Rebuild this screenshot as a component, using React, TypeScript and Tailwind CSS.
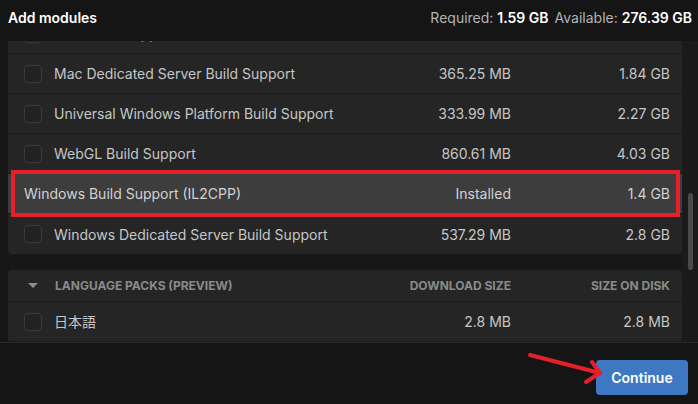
import React from "react";

type Row = { name: string; dl: string; disk: string; highlight?: boolean };

const rows: Row[] = [
  { name: "Mac Build Support (Mono)", dl: "", disk: "" },
  { name: "Mac Dedicated Server Build Support", dl: "365.25 MB", disk: "1.84 GB" },
  { name: "Universal Windows Platform Build Support", dl: "333.99 MB", disk: "2.27 GB" },
  { name: "WebGL Build Support", dl: "860.61 MB", disk: "4.03 GB" },
  { name: "Windows Build Support (IL2CPP)", dl: "Installed", disk: "1.4 GB", highlight: true },
  { name: "Windows Dedicated Server Build Support", dl: "537.29 MB", disk: "2.8 GB" },
];

function Checkbox() {
  return <div className="w-[18px] h-[18px] shrink-0 rounded-[4px] border border-[#3a3a3a] bg-[#222222]" />;
}

function ModuleRow({ r, last }: { r: Row; last?: boolean }) {
  return (
    <div
      className={`relative flex items-center h-10 pl-4 pr-3 ${last ? "" : "border-b border-[#1b1b1b]"} ${
        r.highlight ? "bg-[#3d3d3d] text-[#d2d2d2]" : "text-[#c6c6c6]"
      }`}
    >
      {!r.highlight && <Checkbox />}
      <div className={`flex-1 truncate ${r.highlight ? "" : "ml-3"}`}>{r.name}</div>
      <div className="w-[140px] text-right">{r.dl}</div>
      <div className="w-[159px] text-right">{r.disk}</div>
      {r.highlight && (
        <div className="absolute -top-1 -bottom-1 left-[3px] right-[2px] border-4 border-[#e61f28] z-10 pointer-events-none" />
      )}
    </div>
  );
}

export default function App() {
  return (
    <div
      className="w-[698px] h-[404px] bg-[#171717] flex flex-col overflow-hidden text-[14px]"
      style={{ fontFamily: "Inter, 'Noto Sans CJK JP', sans-serif" }}
    >
      <div className="h-[41px] shrink-0 bg-[#151515] flex items-start justify-between pt-[8px] pl-[8px] pr-[6px] leading-5">
        <div className="font-semibold text-white">Add modules</div>
        <div className="text-[#b3b3b3]">
          Required: <span className="font-semibold text-white">1.59 GB</span>
          <span className="ml-[6px]">Available: </span>
          <span className="font-semibold text-white">276.39 GB</span>
        </div>
      </div>

      <div className="flex-1 flex overflow-hidden min-h-0">
        <div className="flex-1 pl-2 overflow-hidden">
          <div className="-mt-[27px] flex flex-col gap-4">
            <div className="rounded-[4px] bg-[#252525] overflow-hidden">
              {rows.map((r, i) => (
                <ModuleRow key={r.name} r={r} last={i === rows.length - 1} />
              ))}
            </div>
            <div className="rounded-[4px] bg-[#252525] overflow-hidden">
              <div className="flex items-center h-8 pl-[20px] pr-3 border-b border-[#1b1b1b] text-[12px] font-bold text-[#8a8a8a]">
                <svg width="10" height="6" viewBox="0 0 10 6" className="shrink-0">
                  <path d="M0 0 L10 0 L5 5 Z" fill="#8c8c8c" />
                </svg>
                <div className="flex-1 ml-[17px]">LANGUAGE PACKS (PREVIEW)</div>
                <div className="w-[140px] text-right">DOWNLOAD SIZE</div>
                <div className="w-[159px] text-right">SIZE ON DISK</div>
              </div>
              <ModuleRow r={{ name: "日本語", dl: "2.8 MB", disk: "2.8 MB" }} />
            </div>
          </div>
        </div>
        <div className="w-4 shrink-0 bg-[#1a1a1a] pt-[152px] pl-[6px]">
          <div className="w-[5px] h-[77px] rounded-full bg-[#4a4a4a]" />
        </div>
      </div>

      <div className="relative h-[62px] shrink-0 border-t border-[#2a2a2a] bg-[#151515] flex items-start justify-end pt-[17px] pr-[10px]">
        <svg className="absolute left-[520px] top-0" width="90" height="50" viewBox="0 0 90 50">
          <g stroke="#e61f28" strokeWidth="4" strokeLinecap="round" strokeLinejoin="round" fill="none">
            <path d="M10 12 L80 30" />
            <path d="M72 19 L80 30 L66 39" />
          </g>
        </svg>
        <button className="w-[92px] h-[35px] rounded-[4px] bg-[#3e78c2] text-white font-semibold text-[14px]">
          Continue
        </button>
      </div>
    </div>
  );
}
